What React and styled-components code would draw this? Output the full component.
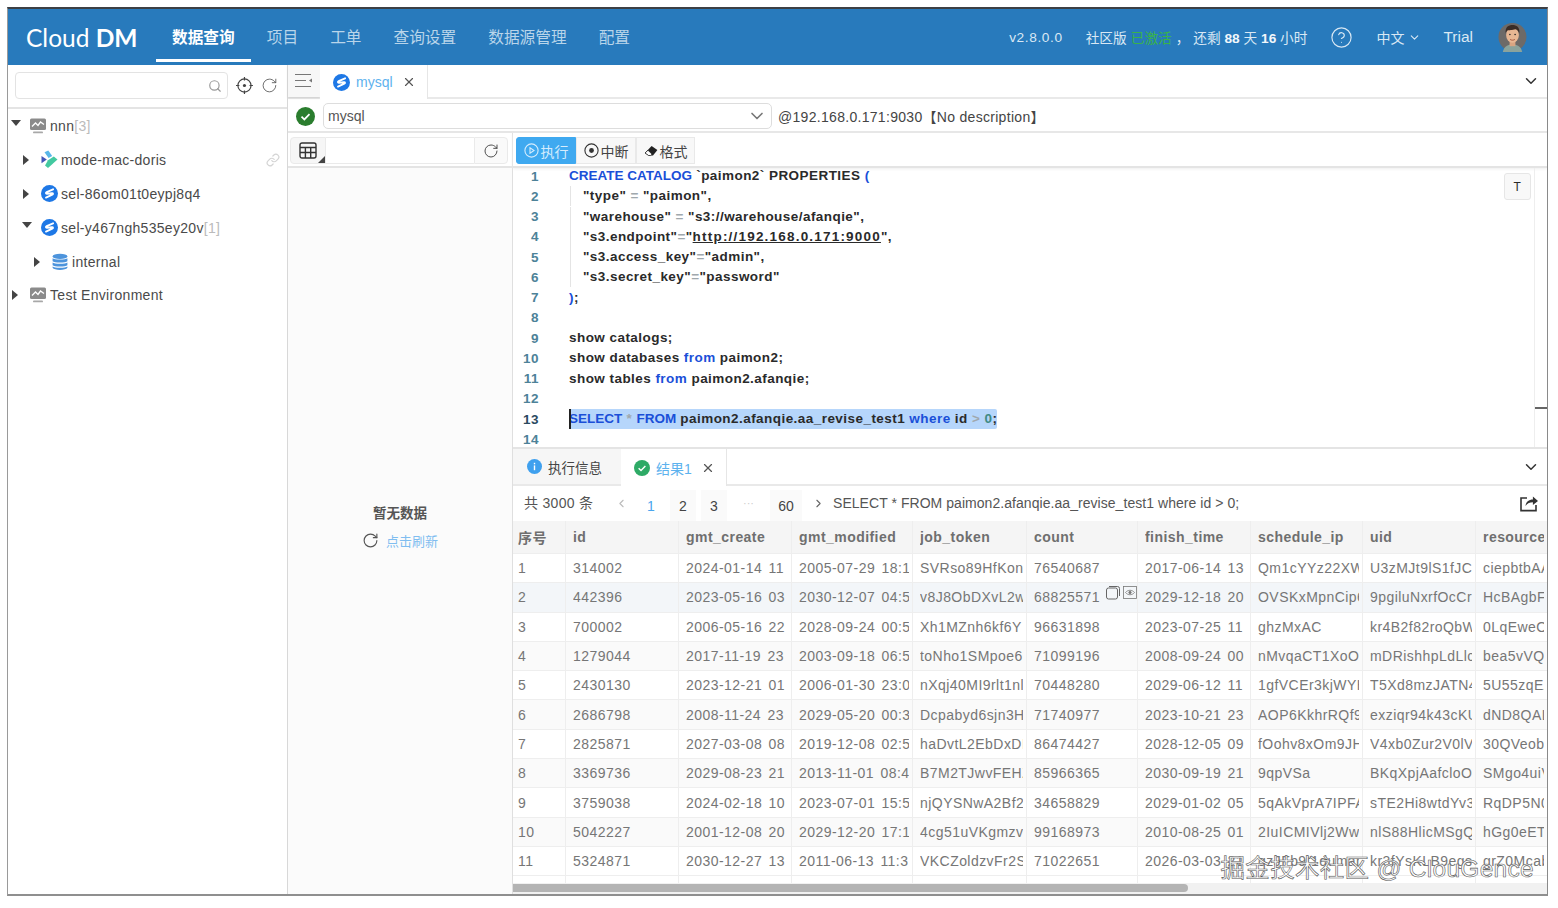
import styled, { createGlobalStyle } from "styled-components";
import {
  ChevronDown,
  ChevronLeft,
  ChevronRight,
  CircleHelp,
  Link,
  RotateCw,
  Search,
  X,
} from "lucide-react";

const GlobalStyle = createGlobalStyle`
  html, body {
    margin: 0;
    background: #fff;
    font-family: "Liberation Sans", "Noto Sans CJK SC", sans-serif;
    color: #444;
  }
  * { box-sizing: border-box; }
`;

const columns = ["id", "gmt_create", "gmt_modified", "job_token", "count", "finish_time", "schedule_ip", "uid", "resource_"];

const rows = [
  ["314002", "2024-01-14 11", "2005-07-29 18:1", "SVRso89HfKoni", "76540687", "2017-06-14 13", "Qm1cYYz22XW", "U3zMJt9lS1fJCi", "ciepbtbAA"],
  ["442396", "2023-05-16 03", "2030-12-07 04:5", "v8J8ObDXvL2w", "68825571", "2029-12-18 20", "OVSKxMpnCip6", "9pgiluNxrfOcCr", "HcBAgbFz"],
  ["700002", "2006-05-16 22", "2028-09-24 00:5", "Xh1MZnh6kf6Y", "96631898", "2023-07-25 11", "ghzMxAC", "kr4B2f82roQbW", "0LqEweO"],
  ["1279044", "2017-11-19 23", "2003-09-18 06:5", "toNho1SMpoe6", "71099196", "2008-09-24 00", "nMvqaCT1XoO9", "mDRishhpLdLlc", "bea5vVQg"],
  ["2430130", "2023-12-21 01", "2006-01-30 23:0", "nXqj40MI9rlt1nl", "70448280", "2029-06-12 11", "1gfVCEr3kjWYH", "T5Xd8mzJATN4", "5U55zqEA"],
  ["2686798", "2008-11-24 23", "2029-05-20 00:3", "Dcpabyd6sjn3H", "71740977", "2023-10-21 23", "AOP6KkhrRQf9t", "exziqr94k43cKU", "dND8QAL"],
  ["2825871", "2027-03-08 08", "2019-12-08 02:5", "haDvtL2EbDxDE", "86474427", "2028-12-05 09", "fOohv8xOm9JH", "V4xb0Zur2V0lV", "30QVeob"],
  ["3369736", "2029-08-23 21", "2013-11-01 08:4", "B7M2TJwvFEHZ", "85966365", "2030-09-19 21", "9qpVSa", "BKqXpjAafcloOV", "SMgo4uiV"],
  ["3759038", "2024-02-18 10", "2023-07-01 15:5", "njQYSNwA2Bf2V", "34658829", "2029-01-02 05", "5qAkVprA7IPFA", "sTE2Hi8wtdYv3", "RqDP5N0"],
  ["5042227", "2001-12-08 20", "2029-12-20 17:1", "4cg51uVKgmzv", "99168973", "2010-08-25 01", "2IuICMIVlj2Wwc", "nlS88HlicMSgQ", "hGg0eET"],
  ["5324871", "2030-12-27 13", "2011-06-13 11:3", "VKCZoldzvFr2S", "71022651", "2026-03-03 21", "qzJFb9t1dumarni", "kr3fYsKLB9egs", "grZ0Mcab"],
];

const Frame = styled.div`
  width: 1558px;
  height: 908px;
  padding: 7px 10px 12px 7px;
`;

const Window = styled.div`
  position: relative;
  height: 100%;
  display: flex;
  flex-direction: column;
  overflow: hidden;
  background: #fff;
  border-top: 2px solid #3c3f44;
  border-left: 1px solid #9a9a9a;
  border-right: 1px solid #8a8a8a;
  border-bottom: 2px solid #8f8f8f;
`;

const Header = styled.header`
  height: 56px;
  flex: none;
  display: flex;
  align-items: center;
  padding: 0 20px 0 18px;
  background: #287abc;
  color: #d9e8f4;
`;

const Logo = styled.div`
  width: 130px;
  flex: none;
  font-family: Lato, sans-serif;
  font-size: 24.5px;
  font-weight: 400;
  color: #fff;
  b {
    font-weight: 700;
  }
`;

const Nav = styled.nav`
  display: flex;
  height: 100%;
`;

const NavItem = styled.a`
  height: 53px;
  display: flex;
  align-items: center;
  padding: 5px 16px 0;
  font-size: 15.7px;
  font-weight: ${({ $active }) => ($active ? 700 : 400)};
  color: ${({ $active }) => ($active ? "#fff" : "#b9d5ea")};
  border-bottom: 3px solid ${({ $active }) => ($active ? "#fff" : "transparent")};
`;

const HeaderRight = styled.div`
  margin-left: auto;
  display: flex;
  align-items: center;
  font-size: 13.7px;
`;

const Version = styled.span`
  margin-right: 23px;
  letter-spacing: 0.6px;
`;

const License = styled.span`
  margin-right: 23px;
  b {
    color: #f2f7fb;
  }
`;

const Activated = styled.span`
  color: #39b34a;
  margin: 0 4px;
`;

const LangSwitch = styled.span`
  display: flex;
  align-items: center;
  gap: 4px;
  margin: 0 22px 0 23px;
  font-size: 14px;
`;

const Trial = styled.span`
  font-size: 15.5px;
  margin-right: 25px;
`;

const Body = styled.div`
  flex: 1;
  min-height: 0;
  display: flex;
`;

const Sidebar = styled.aside`
  width: 280px;
  flex: none;
  border-right: 1px solid #d8d8d8;
`;

const SearchBar = styled.div`
  height: 44px;
  display: flex;
  align-items: center;
  gap: 8px;
  padding: 0 9px 1px 7px;
  border-bottom: 2px solid #e4e4e4;
  color: #555;
`;

const SearchBox = styled.div`
  width: 214px;
  height: 27px;
  display: flex;
  align-items: center;
  justify-content: flex-end;
  padding-right: 5px;
  border: 1px solid #e3e3e3;
  border-radius: 4px;
  color: #999;
`;

const TreeRow = styled.div`
  position: relative;
  height: 33.9px;
  display: flex;
  align-items: center;
  padding-left: ${({ $level }) => 3 + $level * 11}px;
  font-size: 14px;
  letter-spacing: 0.3px;
  color: #4a4a4a;
`;

const Caret = styled.i`
  width: 0;
  height: 0;
  flex: none;
  border-style: solid;
  border-color: transparent;
  ${({ $open }) =>
    $open
      ? `border-width: 6px 5.5px 0; border-top-color: #444; margin: -6px 7px 0 0;`
      : `border-width: 5.5px 0 5.5px 6px; border-left-color: #444; margin: 0 10px 0 1px;`}
`;

const TreeIcon = styled.span`
  width: 20px;
  height: 20px;
  flex: none;
  margin-right: 2px;
  display: flex;
  align-items: center;
  justify-content: center;
`;

const Count = styled.span`
  color: #bbb;
`;

const RowLink = styled.span`
  position: absolute;
  right: 7px;
  top: 10px;
  color: #d4d4d4;
  display: flex;
`;

const Main = styled.main`
  flex: 1;
  min-width: 0;
  display: flex;
  flex-direction: column;
`;

const TabBar = styled.div`
  height: 34px;
  flex: none;
  display: flex;
  align-items: stretch;
  border-bottom: 2px solid #e9e9e9;
`;

const ToggleButton = styled.div`
  width: 32px;
  display: flex;
  align-items: center;
  justify-content: center;
  background: #f7f7f7;
  box-shadow: 0 1px 2px #ccc;
`;

const Tab = styled.div`
  width: ${({ $width }) => $width}px;
  height: calc(100% + 2px);
  display: flex;
  align-items: center;
  gap: 6px;
  padding-left: 13px;
  background: #fff;
  border-right: 1px solid #e6e6e6;
  font-size: 14px;
  color: #5db2ee;
`;

const TabClose = styled.span`
  display: flex;
  margin-left: 3px;
  color: #555;
`;

const BarEnd = styled.span`
  margin-left: auto;
  margin-right: 7px;
  display: flex;
  align-items: center;
  color: #333;
`;

const ConnRow = styled.div`
  height: 34px;
  flex: none;
  display: flex;
  align-items: center;
  padding: 2px 0 0 8px;
  border-bottom: 2px solid #e6e6e6;
  font-size: 14px;
  letter-spacing: 0.3px;
  color: #444;
`;

const ConnSelect = styled.div`
  width: 449px;
  height: 26px;
  margin: 0 6px 0 8px;
  padding: 0 4px;
  display: flex;
  align-items: center;
  justify-content: space-between;
  border: 1px solid #ddd;
  border-radius: 5px;
  letter-spacing: 0;
  color: #555;
`;

const Work = styled.div`
  flex: 1;
  min-height: 0;
  display: flex;
`;

const SchemaPanel = styled.section`
  width: 225px;
  flex: none;
  display: flex;
  flex-direction: column;
  background: #fbfbfb;
  border-right: 1px solid #dfdfdf;
`;

const SchemaBar = styled.div`
  height: 35px;
  flex: none;
  display: flex;
  align-items: center;
  padding: 2px 4px 0 2px;
  background: #fff;
  border-bottom: 2px solid #e4e4e4;
`;

const SchemaTableBtn = styled.div`
  position: relative;
  width: 36px;
  height: 27px;
  display: flex;
  align-items: center;
  justify-content: center;
  background: #f6f6f6;
  border: 1px solid #eaeaea;
  border-radius: 4px 0 0 4px;
  &::after {
    content: "";
    position: absolute;
    right: 0;
    bottom: 0;
    border-style: solid;
    border-width: 0 0 7px 7px;
    border-color: transparent transparent #444 transparent;
  }
`;

const SchemaInput = styled.div`
  flex: 1;
  height: 27px;
  border-top: 1px solid #eaeaea;
  border-bottom: 1px solid #eaeaea;
`;

const SchemaRefresh = styled.div`
  width: 34px;
  height: 27px;
  display: flex;
  align-items: center;
  justify-content: center;
  background: #fafafa;
  border: 1px solid #eaeaea;
  border-radius: 0 4px 4px 0;
  color: #444;
`;

const Empty = styled.div`
  flex: 1;
  display: flex;
  flex-direction: column;
  align-items: center;
  padding-top: 334px;
  gap: 9px;
  font-size: 13.5px;
  color: #555;
  font-weight: 700;
`;

const RefreshLink = styled.div`
  display: flex;
  align-items: center;
  gap: 7px;
  font-weight: 400;
  color: #7fbdf0;
  font-size: 13px;
  svg {
    color: #555;
  }
`;

const QueryPanel = styled.section`
  flex: 1;
  min-width: 0;
  display: flex;
  flex-direction: column;
`;

const Toolbar = styled.div`
  height: 35px;
  flex: none;
  display: flex;
  align-items: center;
  padding: 2px 0 0 3px;
  border-bottom: 2px solid #e4e4e4;
  box-shadow: 0 1px 3px #eee;
`;

const ToolButton = styled.button`
  width: ${({ $width }) => $width || 60}px;
  height: 27px;
  padding: 0;
  display: flex;
  align-items: center;
  justify-content: center;
  gap: 2px;
  font: inherit;
  font-size: 14px;
  color: ${({ $primary }) => ($primary ? "#d5ecfd" : "#444")};
  background: ${({ $primary }) => ($primary ? "#3fa9f0" : "#f8f8f8")};
  border: 1px solid ${({ $primary }) => ($primary ? "#3fa9f0" : "#e9e9e9")};
  border-radius: ${({ $primary }) => ($primary ? "3px 0 0 3px" : "0")};
`;

const Editor = styled.div`
  position: relative;
  height: 281px;
  flex: none;
  overflow: hidden;
  border-bottom: 2px solid #e4e4e4;
  font-size: 13.5px;
  font-weight: 700;
  letter-spacing: 0.45px;
  color: #2a2a2a;
`;

const CodeLines = styled.div`
  margin-top: -2px;
`;

const CodeLine = styled.div`
  height: 20.25px;
  display: flex;
  align-items: center;
  white-space: pre;
`;

const LineNo = styled.span`
  width: 26px;
  flex: none;
  text-align: right;
  margin-right: 30px;
  color: ${({ $current }) => ($current ? "#2b4a5f" : "#4d8298")};
`;

const Code = styled.span`
  position: relative;
  padding-left: ${({ $indent }) => ($indent ? 14 : 0)}px;
  background: ${({ $selected }) => ($selected ? "#b6d6fb" : "transparent")};
  border-radius: 2px;
  line-height: 20px;
  ${({ $indent }) =>
    $indent &&
    `&::before {
      content: "";
      position: absolute;
      left: 1px;
      top: 0;
      bottom: 0;
      border-left: 1px solid #e4e4e4;
    }`}
  ${({ $selected }) =>
    $selected &&
    `&::before {
      content: "";
      position: absolute;
      left: 0;
      top: 0;
      bottom: 0;
      border-left: 2px solid #222;
    }`}
`;

const Kw = styled.span`
  color: #1a4fd8;
`;

const KwUpper = styled(Kw)`
  letter-spacing: 0;
`;

const Op = styled.span`
  color: #a0a8ad;
`;

const Num = styled.span`
  color: #3f8a84;
`;

const Url = styled.span`
  text-decoration: underline;
  letter-spacing: 1.2px;
`;

const TypeToggle = styled.div`
  position: absolute;
  top: 5px;
  right: 16px;
  width: 27px;
  height: 27px;
  display: flex;
  align-items: center;
  justify-content: center;
  background: #f8f8f8;
  border: 1px solid #e6e6e6;
  border-radius: 3px;
  font-size: 12px;
  font-weight: 400;
`;

const Minimap = styled.div`
  position: absolute;
  top: 0;
  bottom: 0;
  right: 0;
  width: 13px;
  border-left: 1px solid #eee;
  &::after {
    content: "";
    position: absolute;
    top: 239px;
    left: 0;
    right: 0;
    height: 2px;
    background: #666;
  }
`;

const ResultTabs = styled.div`
  height: 37px;
  flex: none;
  display: flex;
  align-items: stretch;
  border-bottom: 2px solid #e9e9e9;
`;

const InfoTab = styled.div`
  width: 108px;
  display: flex;
  align-items: center;
  gap: 6px;
  padding-left: 14px;
  background: #f6f6f6;
  font-size: 13.5px;
  color: #444;
`;

const Pager = styled.div`
  height: 35px;
  flex: none;
  display: flex;
  align-items: flex-start;
  padding: 0 8px 0 11px;
  font-size: 14px;
  line-height: 34px;
  color: #555;
`;

const Total = styled.span`
  width: 91px;
  letter-spacing: 0.3px;
`;

const PageArrow = styled.span`
  height: 34px;
  display: flex;
  align-items: center;
  margin-right: ${({ $gap }) => $gap ?? 0}px;
  color: ${({ $dim }) => ($dim ? "#bbb" : "#666")};
`;

const PageNum = styled.span`
  width: ${({ $wide }) => ($wide ? 32 : 26)}px;
  height: 31px;
  margin: 4px ${({ $gap }) => $gap ?? 0}px 0 0;
  display: flex;
  align-items: center;
  justify-content: center;
  background: ${({ $active }) => ($active ? "transparent" : "#fafafa")};
  color: ${({ $active }) => ($active ? "#4aa6ee" : "#444")};
`;

const Ellipsis = styled.span`
  width: 43px;
  text-align: center;
  color: #ccc;
  font-size: 11px;
`;

const QueryText = styled.span`
  margin-left: 8px;
  font-size: 14px;
  color: #555;
  letter-spacing: 0.05px;
`;

const ShareBtn = styled.span`
  margin-left: auto;
  height: 34px;
  display: flex;
  align-items: center;
  color: #333;
`;

const Table = styled.div`
  position: relative;
  flex: 1;
  min-height: 0;
  overflow: hidden;
  padding-bottom: 11px;
`;

const TableRow = styled.div`
  height: ${({ $head }) => ($head ? 33 : 29.3)}px;
  display: grid;
  grid-template-columns: 53px 113px 113px 121px 114px 111px 113px 112px 113px 72px;
  background: ${({ $head, $shade }) => ($head ? "#f5f5f5" : $shade || "#fff")};
  border-bottom: 1px solid #eeeeee;
  font-size: 14px;
  letter-spacing: 0.45px;
  word-spacing: 2px;
  color: ${({ $head }) => ($head ? "#6f6f6f" : "#767676")};
  font-weight: ${({ $head }) => ($head ? 700 : 400)};
`;

const Cell = styled.div`
  position: relative;
  min-width: 0;
  display: flex;
  align-items: center;
  padding: 0 3px 0 ${({ $index }) => ($index ? 5 : 7)}px;
  white-space: nowrap;
  border-right: 1px solid #eeeeee;
`;

const CellText = styled.span`
  display: block;
  overflow: hidden;
`;

const CellActions = styled.span`
  position: absolute;
  right: 0;
  top: 3px;
  display: flex;
  gap: 3px;
  color: #666;
`;

const ScrollTrack = styled.div`
  position: absolute;
  left: 0;
  right: 0;
  bottom: 0;
  height: 11px;
  background: #f1f1f1;
`;

const ScrollThumb = styled.div`
  width: 675px;
  height: 8px;
  margin-top: 1px;
  border-radius: 0 4px 4px 0;
  background: #b4b4b4;
`;

const Watermark = styled.div`
  position: absolute;
  right: 13px;
  bottom: 10px;
  font-size: 24.5px;
  line-height: 30px;
  letter-spacing: 0.3px;
  color: #fff;
  -webkit-text-stroke: 0.6px #555;
  white-space: nowrap;
`;

const SelectDbIcon = ({ size = 18 }) => (
  <svg width={size} height={size} viewBox="0 0 18 18">
    <circle cx="9" cy="9" r="9" fill="#1e78e6" />
    <path
      d="M12.8 4.6 6 7.6c-1.2.6-1 1.7.3 1.6l5.3-.5c1.3-.1 1.5 1 .3 1.6l-6.6 3"
      fill="none"
      stroke="#fff"
      strokeWidth="2"
      strokeLinecap="round"
      strokeLinejoin="round"
    />
  </svg>
);

const DorisIcon = () => (
  <svg width="18" height="19" viewBox="0 0 18 19">
    <path d="M4.5 2.2 8.3.6l3.9 5.3-3.6 2.2z" fill="#58b7e8" />
    <path d="M1.5 6 6.8 9.6 1.5 13.2z" fill="#4356b8" />
    <path d="M8 10.3 13.8 6.5 17.5 9.4 8 18l-3-2.5z" fill="#43c9a0" />
  </svg>
);

const HostIcon = () => (
  <svg width="18" height="18" viewBox="0 0 18 18">
    <rect x="1" y="1.5" width="16" height="11.5" rx="1.5" fill="#8b8b8b" />
    <path d="M3 9.5 6.5 6 9 8.5 11.5 5 15 7.5" fill="none" stroke="#fff" strokeWidth="1.3" />
    <rect x="4" y="14.5" width="10" height="1.8" rx=".9" fill="#a8a8a8" />
  </svg>
);

const DatabaseIcon = () => (
  <svg width="18" height="18" viewBox="0 0 18 18" fill="#4d94dc">
    <ellipse cx="9" cy="3.4" rx="7.4" ry="2.6" />
    <path d="M1.6 5.2C3 7 15 7 16.4 5.2v3C15 10 3 10 1.6 8.2z" />
    <path d="M1.6 9.4C3 11.2 15 11.2 16.4 9.4v2.8C15 14 3 14 1.6 12.2z" />
    <path d="M1.6 13.4C3 15.2 15 15.2 16.4 13.4v1.4C15 17.6 3 17.6 1.6 14.8z" />
  </svg>
);

const CheckCircle = ({ size = 19, color = "#27a05a" }) => (
  <svg width={size} height={size} viewBox="0 0 18 18">
    <circle cx="9" cy="9" r="9" fill={color} />
    <path d="m5.2 9.2 2.7 2.6 4.9-5" fill="none" stroke="#fff" strokeWidth="1.6" />
  </svg>
);

const InfoCircle = () => (
  <svg width="15" height="15" viewBox="0 0 15 15">
    <circle cx="7.5" cy="7.5" r="7.5" fill="#3fa0ee" />
    <rect x="6.8" y="6.4" width="1.4" height="4.8" fill="#fff" />
    <rect x="6.8" y="3.8" width="1.4" height="1.5" fill="#fff" />
  </svg>
);

const TargetIcon = () => (
  <svg width="17" height="17" viewBox="0 0 17 17" fill="none" stroke="#444" strokeWidth="1.2">
    <circle cx="8.5" cy="8.5" r="6.6" />
    <circle cx="8.5" cy="8.5" r="1.6" fill="#444" stroke="none" />
    <path d="M8.5 0v3.4M8.5 13.6V17M0 8.5h3.4M13.6 8.5H17" />
  </svg>
);

const PanelToggleIcon = () => (
  <svg width="18" height="16" viewBox="0 0 18 16" fill="none" stroke="#777" strokeWidth="1">
    <path d="M0 1.5h16M0 7.5h11M0 13.5h16" />
    <path d="M17 5.5v4l-3-2z" fill="#777" stroke="none" />
  </svg>
);

const TableIcon = () => (
  <svg width="18" height="17" viewBox="0 0 18 17" fill="none" stroke="#333" strokeWidth="1.4">
    <rect x="1" y="1" width="16" height="15" rx="2" />
    <path d="M1 5.5h16M1 10.5h16M6.4 5.5V16M11.7 5.5V16" />
  </svg>
);

const PlayIcon = () => (
  <svg width="15" height="15" viewBox="0 0 15 15" fill="none" stroke="#d5ecfd" strokeWidth="1.1">
    <circle cx="7.5" cy="7.5" r="6.6" />
    <path d="M6 4.8v5.4l4-2.7z" />
  </svg>
);

const StopIcon = () => (
  <svg width="15" height="15" viewBox="0 0 15 15" fill="none" stroke="#333" strokeWidth="1.1">
    <circle cx="7.5" cy="7.5" r="6.6" />
    <circle cx="7.5" cy="7.5" r="2.4" fill="#333" stroke="none" />
  </svg>
);

const EraserIcon = () => (
  <svg width="14" height="12" viewBox="0 0 14 12">
    <path d="M7.6 1 13.4 5 9 10.5H4.6L1 8z" fill="#222" />
    <path d="M1 8 4 5.2l4 4-1.4 1.3H4.6z" fill="#fff" stroke="#222" strokeWidth=".8" />
  </svg>
);

const ShareIcon = () => (
  <svg width="20" height="18" viewBox="0 0 20 18" fill="none" stroke="#333" strokeWidth="1.6">
    <path d="M8 4H2v12.6h15V11" />
    <path d="M6.5 12c.4-4 3.4-6.4 7.4-6.4V2.4L19 7l-5.1 4V8.2c-3 0-5.6 1-7.4 3.8z" fill="#333" stroke="none" />
  </svg>
);

const CopyActionIcon = () => (
  <svg width="14" height="14" viewBox="0 0 14 14" fill="none" stroke="#666">
    <rect x=".5" y="2" width="11" height="11" rx="2" />
    <path d="M3 .5h8.5a2 2 0 0 1 2 2V10" />
  </svg>
);

const ViewActionIcon = () => (
  <svg width="14" height="13" viewBox="0 0 14 13" fill="none" stroke="#777" strokeWidth=".8">
    <rect x=".5" y=".5" width="13" height="12" />
    <path d="M2.5 6.5c2.5-3 6.5-3 9 0-2.500 3-6.500 3-9 0z" />
    <circle cx="7" cy="6.5" r="1.2" fill="#777" />
  </svg>
);

const Avatar = () => (
  <svg width="29" height="31" viewBox="0 0 30 32">
    <circle cx="15" cy="15.5" r="14.5" fill="#6d6a68" />
    <path d="M5 31c1-6 6-8 10-8s9 2 10 8z" fill="#8ba39c" />
    <rect x="12" y="18" width="6" height="7" fill="#d9a582" />
    <ellipse cx="15" cy="13.5" rx="6.6" ry="8" fill="#e8b793" />
    <path d="M8 12c-1-7 3-9 7-9s8 2 7 9c-1-3-2-4-4-4.5-3 1-7 1-8 1-1 1-2 2-2 3.5z" fill="#3a2c26" />
    <circle cx="12.3" cy="13" r=".8" fill="#222" />
    <circle cx="17.7" cy="13" r=".8" fill="#222" />
    <path d="M12.5 18c1.5 1 3.5 1 5 0" fill="none" stroke="#a5583f" />
  </svg>
);

const code = [
  <Code><KwUpper>CREATE CATALOG</KwUpper> `paimon2` PROPERTIES <Kw>(</Kw></Code>,
  <Code $indent>"type" <Op>=</Op> "paimon",</Code>,
  <Code $indent>"warehouse" <Op>=</Op> "s3://warehouse/afanqie",</Code>,
  <Code $indent>"s3.endpoint"<Op>=</Op>"<Url>http://192.168.0.171:9000</Url>",</Code>,
  <Code $indent>"s3.access_key"<Op>=</Op>"admin",</Code>,
  <Code $indent>"s3.secret_key"<Op>=</Op>"password"</Code>,
  <Code><Kw>)</Kw>;</Code>,
  null,
  <Code>show catalogs;</Code>,
  <Code>show databases <Kw>from</Kw> paimon2;</Code>,
  <Code>show tables <Kw>from</Kw> paimon2.afanqie;</Code>,
  null,
  <Code $selected><KwUpper>SELECT</KwUpper> <Op>*</Op> <KwUpper>FROM</KwUpper> paimon2.afanqie.aa_revise_test1 <Kw>where</Kw> id <Op>&gt;</Op> <Num>0</Num>;</Code>,
  null,
];

const rowShade = (idx) => {
  if (idx === 1) return "#f3f6f9";
  return idx % 2 === 1 ? "#fafafa" : "#fff";
};

export default function App() {
  return (
    <Frame>
      <GlobalStyle />
      <Window>
        <Header>
          <Logo>Cloud <b>DM</b></Logo>
          <Nav>
            <NavItem $active>数据查询</NavItem>
            <NavItem>项目</NavItem>
            <NavItem>工单</NavItem>
            <NavItem>查询设置</NavItem>
            <NavItem>数据源管理</NavItem>
            <NavItem>配置</NavItem>
          </Nav>
          <HeaderRight>
            <Version>v2.8.0.0</Version>
            <License>
              社区版<Activated>已激活</Activated>， 还剩 <b>88</b> 天 <b>16</b> 小时
            </License>
            <CircleHelp size={23} strokeWidth={1.2} />
            <LangSwitch>中文 <ChevronDown size={13} /></LangSwitch>
            <Trial>Trial</Trial>
            <Avatar />
          </HeaderRight>
        </Header>
        <Body>
          <Sidebar>
            <SearchBar>
              <SearchBox><Search size={14} /></SearchBox>
              <TargetIcon />
              <RotateCw size={17} strokeWidth={1.2} />
            </SearchBar>
            <TreeRow $level={0}>
              <Caret $open /><TreeIcon><HostIcon /></TreeIcon>nnn<Count>[3]</Count>
            </TreeRow>
            <TreeRow $level={1}>
              <Caret /><TreeIcon><DorisIcon /></TreeIcon>mode-mac-doris
              <RowLink><Link size={14} /></RowLink>
            </TreeRow>
            <TreeRow $level={1}>
              <Caret /><TreeIcon><SelectDbIcon size={17} /></TreeIcon>sel-86om01t0eypj8q4
            </TreeRow>
            <TreeRow $level={1}>
              <Caret $open /><TreeIcon><SelectDbIcon size={17} /></TreeIcon>sel-y467ngh535ey20v<Count>[1]</Count>
            </TreeRow>
            <TreeRow $level={2}>
              <Caret /><TreeIcon><DatabaseIcon /></TreeIcon>internal
            </TreeRow>
            <TreeRow $level={0}>
              <Caret /><TreeIcon><HostIcon /></TreeIcon>Test Environment
            </TreeRow>
          </Sidebar>
          <Main>
            <TabBar>
              <ToggleButton><PanelToggleIcon /></ToggleButton>
              <Tab $width={108}>
                <SelectDbIcon size={17} />mysql
                <TabClose><X size={14} /></TabClose>
              </Tab>
              <BarEnd><ChevronDown size={18} strokeWidth={2} /></BarEnd>
            </TabBar>
            <ConnRow>
              <CheckCircle color="#2a7d2e" />
              <ConnSelect>mysql <ChevronDown size={20} color="#777" /></ConnSelect>
              @192.168.0.171:9030【No description】
            </ConnRow>
            <Work>
              <SchemaPanel>
                <SchemaBar>
                  <SchemaTableBtn><TableIcon /></SchemaTableBtn>
                  <SchemaInput />
                  <SchemaRefresh><RotateCw size={16} strokeWidth={1.4} /></SchemaRefresh>
                </SchemaBar>
                <Empty>
                  暂无数据
                  <RefreshLink><RotateCw size={17} strokeWidth={1.6} />点击刷新</RefreshLink>
                </Empty>
              </SchemaPanel>
              <QueryPanel>
                <Toolbar>
                  <ToolButton $primary><PlayIcon />执行</ToolButton>
                  <ToolButton><StopIcon />中断</ToolButton>
                  <ToolButton $width={59}><EraserIcon />格式</ToolButton>
                </Toolbar>
                <Editor>
                  <CodeLines>
                    {code.map((line, idx) => (
                      <CodeLine key={idx}>
                        <LineNo $current={idx === 12}>{idx + 1}</LineNo>
                        {line}
                      </CodeLine>
                    ))}
                  </CodeLines>
                  <TypeToggle>T</TypeToggle>
                  <Minimap />
                </Editor>
                <ResultTabs>
                  <InfoTab><InfoCircle />执行信息</InfoTab>
                  <Tab $width={106}>
                    <CheckCircle size={16} color="#2eaa66" />结果1
                    <TabClose><X size={14} /></TabClose>
                  </Tab>
                  <BarEnd><ChevronDown size={18} strokeWidth={2} /></BarEnd>
                </ResultTabs>
                <Pager>
                  <Total>共 3000 条</Total>
                  <PageArrow $dim $gap={10}><ChevronLeft size={13} /></PageArrow>
                  <PageNum $active $gap={6}>1</PageNum>
                  <PageNum $gap={5}>2</PageNum>
                  <PageNum>3</PageNum>
                  <Ellipsis>···</Ellipsis>
                  <PageNum $wide $gap={10}>60</PageNum>
                  <PageArrow><ChevronRight size={13} /></PageArrow>
                  <QueryText>SELECT * FROM paimon2.afanqie.aa_revise_test1 where id &gt; 0;</QueryText>
                  <ShareBtn><ShareIcon /></ShareBtn>
                </Pager>
                <Table>
                  <TableRow $head>
                    <Cell $index>序号</Cell>
                    {columns.map((name) => <Cell key={name}><CellText>{name}</CellText></Cell>)}
                  </TableRow>
                  {rows.map((row, idx) => (
                    <TableRow key={row[0]} $shade={rowShade(idx)}>
                      <Cell $index>{idx + 1}</Cell>
                      {row.map((value, col) => (
                        <Cell key={col}>
                          <CellText>{value}</CellText>
                          {idx === 1 && col === 4 && (
                            <CellActions><CopyActionIcon /><ViewActionIcon /></CellActions>
                          )}
                        </Cell>
                      ))}
                    </TableRow>
                  ))}
                  <TableRow>
                    {Array.from({ length: 10 }, (_, i) => <Cell key={i} />)}
                  </TableRow>
                  <ScrollTrack><ScrollThumb /></ScrollTrack>
                </Table>
              </QueryPanel>
            </Work>
          </Main>
        </Body>
        <Watermark>掘金技术社区 @ ClouGence</Watermark>
      </Window>
    </Frame>
  );
}
